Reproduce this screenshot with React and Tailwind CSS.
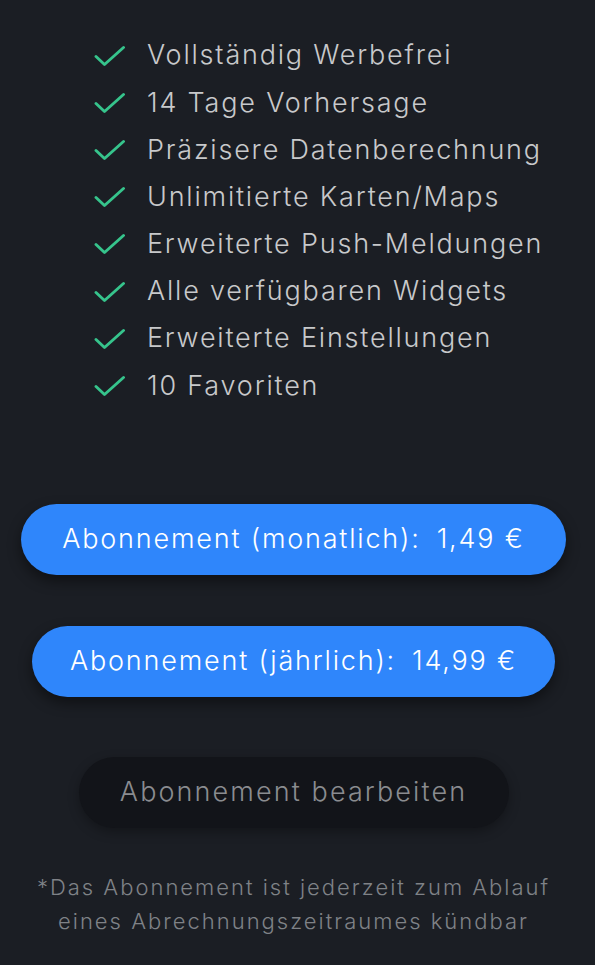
import React from 'react'

const features = [
  'Vollständig Werbefrei',
  '14 Tage Vorhersage',
  'Präzisere Datenberechnung',
  'Unlimitierte Karten/Maps',
  'Erweiterte Push-Meldungen',
  'Alle verfügbaren Widgets',
  'Erweiterte Einstellungen',
  '10 Favoriten',
]

function CheckIcon() {
  return (
    <svg width="32" height="22" viewBox="0 0 32 22" fill="none" className="shrink-0">
      <path d="M2 11.5 L10.5 19.5 L29.5 2.5" stroke="#36c48c" strokeWidth="2.9" strokeLinecap="round" strokeLinejoin="round" />
    </svg>
  )
}

function PriceButton({ label, price, width }) {
  return (
    <button
      className={`h-[71px] rounded-full bg-[#2f86fb] text-white text-[27px] tracking-[1.8px] shadow-[0_6px_14px_rgba(0,0,0,0.45)] flex items-center justify-center ${width}`}
    >
      {label}
      <span className="ml-[16px]">{price}</span>
    </button>
  )
}

export default function App() {
  return (
    <div className="min-h-[965px] bg-[#1b1e24] font-['Inter',sans-serif] font-[350]">
      <ul className="pt-[32px] pl-[94px] flex flex-col">
        {features.map(f => (
          <li key={f} className="h-[47.2px] flex items-center gap-[21px] text-[#c8c9cb] text-[27px] tracking-[1.8px]">
            <CheckIcon />
            <span>{f}</span>
          </li>
        ))}
      </ul>

      <div className="w-[587px] flex flex-col items-center mt-[94px]">
        <PriceButton label="Abonnement (monatlich):" price="1,49 €" width="w-[545px]" />
        <div className="h-[51px]" />
        <PriceButton label="Abonnement (jährlich):" price="14,99 €" width="w-[523px]" />

        <button className="mt-[60px] w-[430px] h-[71px] rounded-full bg-[#121419] text-[#8a8c90] text-[27px] tracking-[2.1px] shadow-[0_4px_12px_rgba(0,0,0,0.3)]">
          Abonnement bearbeiten
        </button>

        <p className="mt-[42px] text-center text-[22px] leading-[34px] tracking-[2px] text-[#7f8287]">
          *Das Abonnement ist jederzeit zum Ablauf
          <br />
          eines Abrechnungszeitraumes kündbar
        </p>
      </div>
    </div>
  )
}
